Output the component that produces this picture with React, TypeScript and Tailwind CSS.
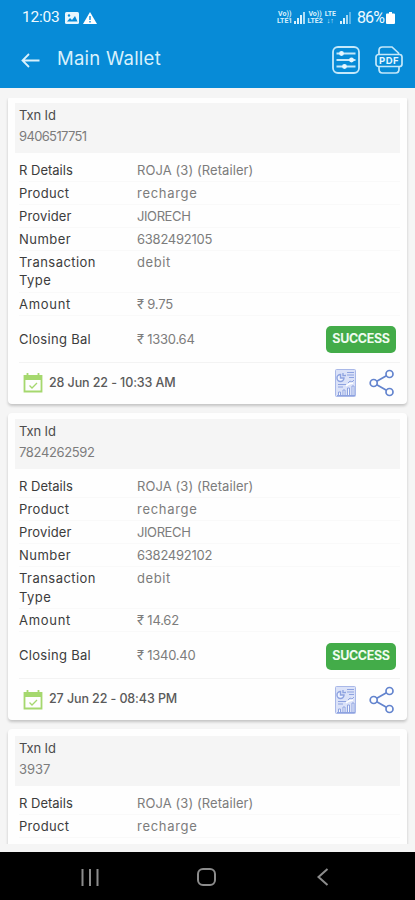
import clsx from "clsx";

type Txn = {
  id: string;
  idClass: string;
  number: string;
  amount: string;
  balance: string;
  date: string;
};

const transactions: Txn[] = [
  {
    id: "9406517751",
    idClass: "tracking-[-0.65px]",
    number: "6382492105",
    amount: "₹ 9.75",
    balance: "₹ 1330.64",
    date: "28 Jun 22 - 10:33 AM",
  },
  {
    id: "7824262592",
    idClass: "tracking-[-0.35px]",
    number: "6382492102",
    amount: "₹ 14.62",
    balance: "₹ 1340.40",
    date: "27 Jun 22 - 08:43 PM",
  },
];

function Signal({ weak = false }: { weak?: boolean }) {
  return (
    <svg width="12" height="12" viewBox="0 0 12 12" fill="#d9f1fc">
      <rect x="0" y="9" width="2" height="3" />
      <rect x="3" y="6" width="2" height="6" />
      <rect x="6" y="3" width="2" height="9" opacity={weak ? 0.75 : 1} />
      <rect x="9" y="0" width="2" height="12" opacity={weak ? 0.4 : 0.8} />
    </svg>
  );
}

function Sim({ lines }: { lines: string[] }) {
  return (
    <div className="flex flex-col text-center text-[7px] leading-[6.5px] font-bold text-[#d9f1fc]">
      {lines.map((line) => (
        <span key={line}>{line}</span>
      ))}
    </div>
  );
}

function StatusBar() {
  return (
    <div className="flex h-[35px] items-center pr-[20px] pl-[22px] font-[Roboto,sans-serif] text-[#effaff]">
      <span className="pt-[1px] text-[15.5px] tracking-[-0.2px]">12:03</span>
      <svg className="ml-[5px]" width="14" height="12" viewBox="0 0 14 12">
        <rect width="14" height="12" rx="1.5" fill="#e8f6fd" />
        <path d="M2 9.5 5 6l2 2 3-4 2.5 5.5z" fill="#078bd7" />
        <circle cx="4" cy="3.5" r="1.2" fill="#078bd7" />
      </svg>
      <svg className="ml-[4px]" width="14" height="12" viewBox="0 0 14 12">
        <path d="M7 0 14 12H0z" fill="#fff" />
        <path d="M6.3 4h1.4v4H6.3zM6.3 9h1.4v1.5H6.3z" fill="#078bd7" />
      </svg>
      <div className="ml-auto flex items-center">
        <Sim lines={["Vo))", "LTE1"]} />
        <div className="ml-[2px]">
          <Signal />
        </div>
        <div className="ml-[1px]">
          <Sim lines={["Vo))", "LTE2"]} />
        </div>
        <div className="ml-[2px]">
          <Sim lines={["LTE", "↓↑"]} />
        </div>
        <div className="ml-[4px]">
          <Signal weak />
        </div>
        <span className="ml-[5px] text-[16px] tracking-[-0.9px]">86%</span>
        <svg className="ml-[2px]" width="9" height="12" viewBox="0 0 9 12">
          <path d="M3 0h3v1.5h2q1 0 1 1V11q0 1-1 1H1q-1 0-1-1V2.500q0-1 1-1h2z" fill="#fff" />
        </svg>
      </div>
    </div>
  );
}

function AppBar() {
  return (
    <div className="flex h-[50px] items-center pr-[12px] pl-[21px] text-white">
      <svg width="19" height="15" viewBox="0 0 19 15" fill="none" stroke="#d9f1fc" strokeWidth="1.8">
        <path d="M18.500 7.500H1.500M8 1 1.500 7.500 8 14" />
      </svg>
      <h1 className="ml-[17px] -mt-[2px] text-[18.5px] tracking-[0.25px] text-[#d9f1fc]">Main Wallet</h1>
      <svg className="ml-auto" width="28" height="28" viewBox="0 0 28 28" fill="none" stroke="#c4e8fa" strokeWidth="1.8">
        <rect x="1" y="1" width="26" height="26" rx="5" />
        <path d="M4.500 7.500h19M4.500 14h19M4.500 20.500h19" />
        <g fill="#e6f7ff" stroke="none">
          <circle cx="9.500" cy="7.500" r="2.400" />
          <circle cx="19.500" cy="14" r="2.400" />
          <circle cx="12.500" cy="20.500" r="2.400" />
        </g>
      </svg>
      <svg className="ml-[15px]" width="28" height="28" viewBox="0 0 28 28" fill="none" stroke="#c4e8fa" strokeWidth="1.7">
        <path d="M4 8.500V4.500Q4 1 7.500 1H17l6.500 6v1.500M4 20.500V23q0 4 3.500 4h13q3.500 0 3.500-4v-2.500" />
        <rect x="1" y="8.500" width="26" height="12" rx="2.500" />
        <text x="14" y="18" textAnchor="middle" fontSize="9.500" fontWeight="700" letterSpacing="0.4" fill="#e6f7ff" stroke="none">
          PDF
        </text>
      </svg>
    </div>
  );
}

function Row({
  label,
  value,
  labelClass,
  valueClass,
  className,
}: {
  label: string;
  value: string;
  labelClass?: string;
  valueClass?: string;
  className?: string;
}) {
  return (
    <div className={clsx("flex border-b border-[#f9f9f9] pt-[2px]", className ?? "h-[23px]")}>
      <div className={clsx("w-[118px] pr-6 text-[#3c3c3c]", labelClass)}>{label}</div>
      <div className={clsx("text-[#7c7c7c]", valueClass)}>{value}</div>
    </div>
  );
}

function ReportIcon() {
  return (
    <svg width="22" height="28" viewBox="0 0 22 28" fill="none" stroke="#8ea3e0" strokeWidth="1">
      <rect x="0.500" y="0.500" width="20" height="27" rx="1" fill="#dbe2f8" stroke="#a9b8e8" />
      <path d="M5.500 5.500a3.500 3.500 0 1 0 3.500 3.500H5.500zM8 4v2.500h3" fill="#f0f4ff" strokeWidth="1.400" />
      <path d="M12 3.500h7M12 6h7M14 8.500h5M3 15.500h8M3 18h5M13 14l2-2 2 1 2-2" />
      <path d="M3.500 26v-3h2v3M8 26v-5h2v5M12.500 26v-7h2v7M17 26v-9h2v9M2 26.500h18" fill="#f7f9ff" />
      <path d="m11 17 3-2 4-1" stroke="#fff" strokeWidth="1.500" />
    </svg>
  );
}

function ShareIcon() {
  return (
    <svg width="26" height="28" viewBox="0 0 26 28" fill="none" stroke="#6384ce" strokeWidth="1.700">
      <circle cx="4.700" cy="14" r="3.500" />
      <circle cx="20.500" cy="5" r="3.500" />
      <circle cx="20.500" cy="23" r="3.500" />
      <path d="m7.800 12.200 9.600-5.500M7.800 15.800l9.600 5.500" />
    </svg>
  );
}

function TxnHead({ id, idClass }: { id: string; idClass?: string }) {
  return (
    <div className="h-[50px] bg-[#f5f5f5] pt-[2px] pl-[4px]">
      <div className="leading-[20px] tracking-[-0.1px] text-[#4c4c4c]">Txn Id</div>
      <div className={clsx("leading-[22px] text-[#7c7c7c]", idClass)}>{id}</div>
    </div>
  );
}

function SummaryRows() {
  return (
    <>
      <Row label="R Details" value="ROJA (3) (Retailer)" valueClass="tracking-[0.08px]" />
      <Row label="Product" value="recharge" labelClass="tracking-[0.3px]" valueClass="tracking-[0.7px]" />
    </>
  );
}

function TxnCard({ txn }: { txn: Txn }) {
  return (
    <div className="h-[307.5px] shrink-0 rounded-[4px] bg-[#fefefe] px-[7px] pt-[6.5px] shadow-[0_2px_3px_rgba(0,0,0,0.2)]">
      <TxnHead id={txn.id} idClass={txn.idClass} />
      <div className="mt-[6px] pl-[4px] leading-[18.5px]">
        <SummaryRows />
        <Row label="Provider" value="JIORECH" labelClass="tracking-[0.15px]" valueClass="tracking-[-0.4px]" />
        <Row label="Number" value={txn.number} labelClass="tracking-[0.45px]" valueClass="tracking-[-0.25px]" />
        <Row
          label="Transaction Type"
          value="debit"
          className="h-[42px]"
          labelClass="tracking-[0.45px]"
          valueClass="tracking-[0.6px]"
        />
        <Row label="Amount" value={txn.amount} labelClass="tracking-[0.7px]" valueClass="tracking-[-0.2px]" />
        <div className="flex h-[47px] items-center border-b border-[#f3f3f3] pr-[4px]">
          <div className="w-[118px] pt-[1px] tracking-[0.3px] text-[#3c3c3c]">Closing Bal</div>
          <div className="pt-[1px] tracking-[-0.25px] text-[#7c7c7c]">{txn.balance}</div>
          <div className="mt-[2px] ml-auto flex h-[27px] w-[70px] items-center justify-center rounded-[5px] bg-[#43ac49] text-[12.5px] font-bold tracking-[-0.35px] text-[#effbef]">
            SUCCESS
          </div>
        </div>
        <div className="flex h-[41px] items-center pr-[5px] pl-[4px]">
          <svg width="20" height="20" viewBox="0 0 20 20" fill="none" stroke="#a5d86e" strokeWidth="1.800">
            <path d="M1.500 3h17v15.500h-17z" />
            <path d="M1 2.500h18V7H1z" fill="#a5d86e" stroke="none" />
            <path d="M4.500 0v3M15.500 0v3" />
            <path d="m6.500 12.500 2.500 2.500 5-5" strokeWidth="1.300" />
          </svg>
          <span className="ml-[6px] text-[12.5px] font-medium tracking-[-0.1px] text-[#5a5a5a]">{txn.date}</span>
          <div className="ml-auto flex items-center gap-[12px]">
            <ReportIcon />
            <ShareIcon />
          </div>
        </div>
      </div>
    </div>
  );
}

function NavBar() {
  return (
    <div className="flex h-[48px] items-center bg-black pt-[2px] pl-[81px]">
      <svg width="18" height="17" viewBox="0 0 18 17" stroke="#8c8c8c" strokeWidth="2">
        <path d="M1.500 0v17M9 0v17M16.500 0v17" />
      </svg>
      <svg className="ml-[98px]" width="19" height="18" viewBox="0 0 19 18" fill="none" stroke="#8c8c8c" strokeWidth="2">
        <rect x="1" y="1" width="17" height="16" rx="5" />
      </svg>
      <svg className="ml-[101px]" width="12" height="18" viewBox="0 0 12 18" fill="none" stroke="#8c8c8c" strokeWidth="2">
        <path d="m10.500 1-9 8 9 8" />
      </svg>
    </div>
  );
}

export default function App() {
  return (
    <div className="flex h-[900px] w-[415px] flex-col overflow-hidden bg-[#f5f5f5] font-[Inter,sans-serif] text-[13px]">
      <header className="h-[88px] shrink-0 bg-[#078bd7]">
        <StatusBar />
        <AppBar />
      </header>
      <div className="mt-[10px] h-[746px] shrink-0 overflow-hidden px-[8px]">
        <div className="-mt-[2px] flex flex-col gap-[9px]">
          {transactions.map((txn) => (
            <TxnCard key={txn.id} txn={txn} />
          ))}
          <div className="h-[130px] shrink-0 rounded-t-[4px] bg-[#fefefe] px-[7px] pt-[6.5px] shadow-[0_2px_3px_rgba(0,0,0,0.2)]">
            <TxnHead id="3937" />
            <div className="mt-[6px] pl-[4px] leading-[18.5px]">
              <SummaryRows />
            </div>
          </div>
        </div>
      </div>
      <div className="mt-auto">
        <NavBar />
      </div>
    </div>
  );
}
